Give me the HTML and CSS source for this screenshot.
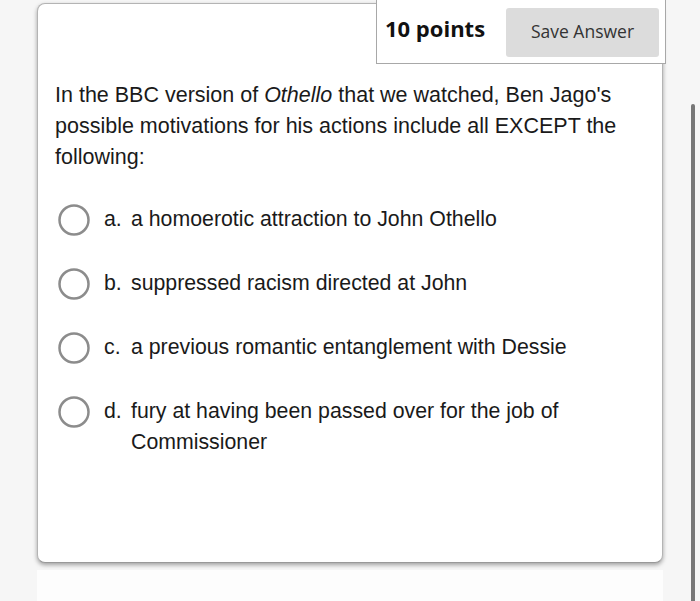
FILE: index.html
```html
<!DOCTYPE html>
<html>
<head>
<meta charset="utf-8">
<link rel="stylesheet" href="styles.css">
</head>
<body>
<div class="page">
  <div class="card">
    <div class="points-box">
      <span class="points">10 points</span>
      <button class="save">Save Answer</button>
    </div>
    <p class="question">In the BBC version of <em>Othello</em> that we watched, Ben Jago's possible motivations for his actions include all EXCEPT the following:</p>
    <ul class="options">
      <li class="option">
        <svg class="radio" width="32" height="32" viewBox="0 0 32 32"><circle cx="16" cy="16" r="14.5" fill="#fff" stroke="#8c8c8c" stroke-width="2.5"/></svg>
        <span class="letter">a.</span>
        <span class="text">a homoerotic attraction to John Othello</span>
      </li>
      <li class="option">
        <svg class="radio" width="32" height="32" viewBox="0 0 32 32"><circle cx="16" cy="16" r="14.5" fill="#fff" stroke="#8c8c8c" stroke-width="2.5"/></svg>
        <span class="letter">b.</span>
        <span class="text">suppressed racism directed at John</span>
      </li>
      <li class="option">
        <svg class="radio" width="32" height="32" viewBox="0 0 32 32"><circle cx="16" cy="16" r="14.5" fill="#fff" stroke="#8c8c8c" stroke-width="2.5"/></svg>
        <span class="letter">c.</span>
        <span class="text">a previous romantic entanglement with Dessie</span>
      </li>
      <li class="option">
        <svg class="radio" width="32" height="32" viewBox="0 0 32 32"><circle cx="16" cy="16" r="14.5" fill="#fff" stroke="#8c8c8c" stroke-width="2.5"/></svg>
        <span class="letter">d.</span>
        <span class="text">fury at having been passed over for the job of Commissioner</span>
      </li>
    </ul>
  </div>
  <div class="next-card"></div>
  <div class="scrollbar"></div>
</div>
</body>
</html>
```
FILE: styles.css
```css
html, body {
  margin: 0;
  padding: 0;
  background: #f6f6f6;
  overflow: hidden;
}
.page {
  position: relative;
  width: 700px;
  height: 601px;
  padding: 3px 0 0 37px;
  box-sizing: border-box;
}
.card {
  position: relative;
  width: 626px;
  height: 560px;
  box-sizing: border-box;
  background: #fff;
  border: 1px solid #b4b4b4;
  border-bottom-color: #999;
  border-radius: 8px;
  box-shadow: 0 2px 4px rgba(0,0,0,0.35);
  padding: 76px 20px 0 17px;
  font-family: "Liberation Sans", Arial, sans-serif;
  color: #1a1a1a;
}
.points-box {
  position: absolute;
  top: -12px;
  left: 338px;
  width: 290px;
  height: 72px;
  box-sizing: border-box;
  background: #fff;
  border: 1px solid #a8a8a8;
  display: flex;
  align-items: flex-end;
  justify-content: space-between;
  padding: 0 6px 6px 8px;
  font-family: "Open Sans", sans-serif;
}
.points {
  font-weight: 700;
  font-size: 22px;
  color: #111;
  line-height: 49px;
  padding-bottom: 4px;
}
.save {
  width: 153px;
  height: 49px;
  border: none;
  border-radius: 3px;
  background: #dcdcdc;
  font-family: "Open Sans", sans-serif;
  font-size: 17.5px;
  color: #333;
  padding: 0 0 4px 0;
}
.question {
  margin: 0;
  font-size: 21.5px;
  line-height: 31px;
}
.options {
  list-style: none;
  margin: 31px 0 0 0;
  padding: 0;
  display: flex;
  flex-direction: column;
  gap: 32px;
}
.option {
  display: flex;
  align-items: flex-start;
  font-size: 21.3px;
  line-height: 31px;
}
.radio {
  flex: none;
  margin: 0 14px 0 3px;
}
.letter {
  flex: none;
  width: 27px;
}
.text {
  flex: 1;
  padding-right: 60px;
}
.next-card {
  width: 626px;
  height: 40px;
  margin-top: 7px;
  background: #fdfdfd;
}
.scrollbar {
  position: absolute;
  left: 691px;
  top: 104px;
  width: 4px;
  height: 520px;
  border-radius: 2px;
  background: #777;
}
```
